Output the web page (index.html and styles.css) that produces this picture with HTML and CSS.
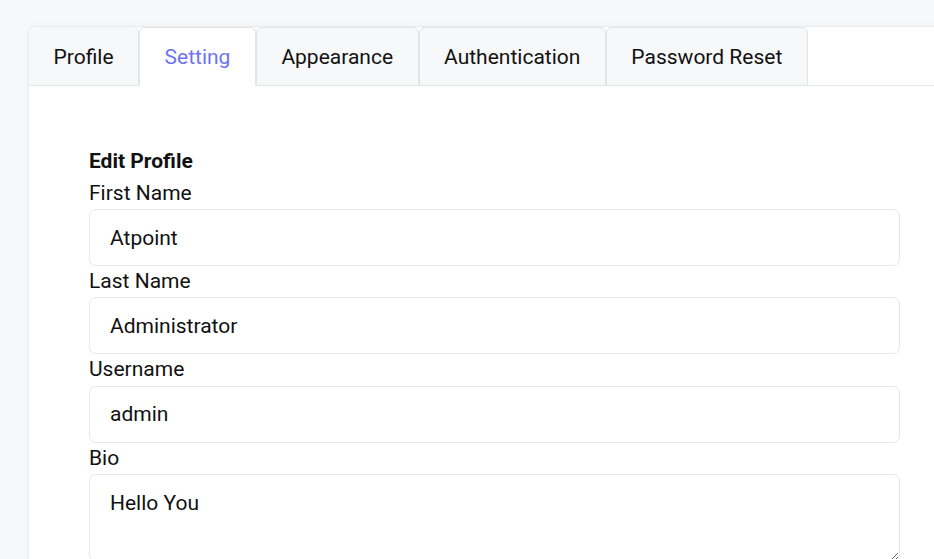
FILE: index.html
```html
<!DOCTYPE html>
<html>
<head>
<meta charset="utf-8">
<link rel="stylesheet" href="styles.css">
</head>
<body>
<div class="page">
  <div class="card">
    <div class="tabs">
      <div class="tab">Profile</div>
      <div class="tab active">Setting</div>
      <div class="tab">Appearance</div>
      <div class="tab">Authentication</div>
      <div class="tab">Password Reset</div>
    </div>
    <div class="content">
      <div class="title">Edit Profile</div>
      <label class="label">First Name</label>
      <input class="field" type="text" value="Atpoint">
      <label class="label">Last Name</label>
      <input class="field" type="text" value="Administrator">
      <label class="label">Username</label>
      <input class="field" type="text" value="admin">
      <label class="label">Bio</label>
      <textarea class="field area">Hello You</textarea>
    </div>
  </div>
</div>
</body>
</html>
```
FILE: styles.css
```css
* { box-sizing: border-box; }
html, body { margin: 0; padding: 0; }
body {
  background: #f7f8fa;
  font-family: Roboto, "Liberation Sans", sans-serif;
  color: #111;
  overflow: hidden;
  width: 934px;
  height: 559px;
}
.page {
  padding: 27px 0 0 28px;
}
.card {
  background: #fff;
  border: 1px solid #e8eaee;
  border-right: none;
  border-radius: 8px 0 0 0;
  width: 920px;
  min-height: 600px;
  box-shadow: 0 0 6px rgba(0,0,0,0.03);
  margin-top: -1px;
}
.tabs {
  display: flex;
  border-bottom: 1px solid #e2e4e8;
  height: 59px;
}
.tab {
  height: 59px;
  margin-bottom: -1px;
  padding: 1px 24.5px 0;
  display: flex;
  align-items: center;
  font-size: 21px;
  color: #111;
  background: #f7f8fa;
  border: 1px solid #e2e4e8;
  border-radius: 6px 6px 0 0;
}
.tab:first-child { border-left: none; border-top: none; }
.tab.active {
  background: #fff;
  color: #6e74f3;
  border-bottom-color: #fff;
}
.content {
  padding: 61px 33px 0 60px;
  display: flex;
  flex-direction: column;
}
.title {
  font-weight: 700;
  font-size: 21px;
  line-height: 26px;
  padding-top: 1px;
  margin-bottom: 3.7px;
}
.label {
  font-size: 21px;
  line-height: 26px;
  padding-top: 2px;
  margin-bottom: 3.35px;
  display: block;
}
.field {
  width: 811px;
  height: 57px;
  border: 1px solid #e6e8eb;
  border-radius: 7px;
  padding: 0 20px;
  font-family: Roboto, "Liberation Sans", sans-serif;
  font-size: 21px;
  color: #111;
  background: #fff;
  outline: none;
}
.area {
  height: 88px;
  padding: 15px 20px;
  line-height: 26px;
  resize: vertical;
}
```
